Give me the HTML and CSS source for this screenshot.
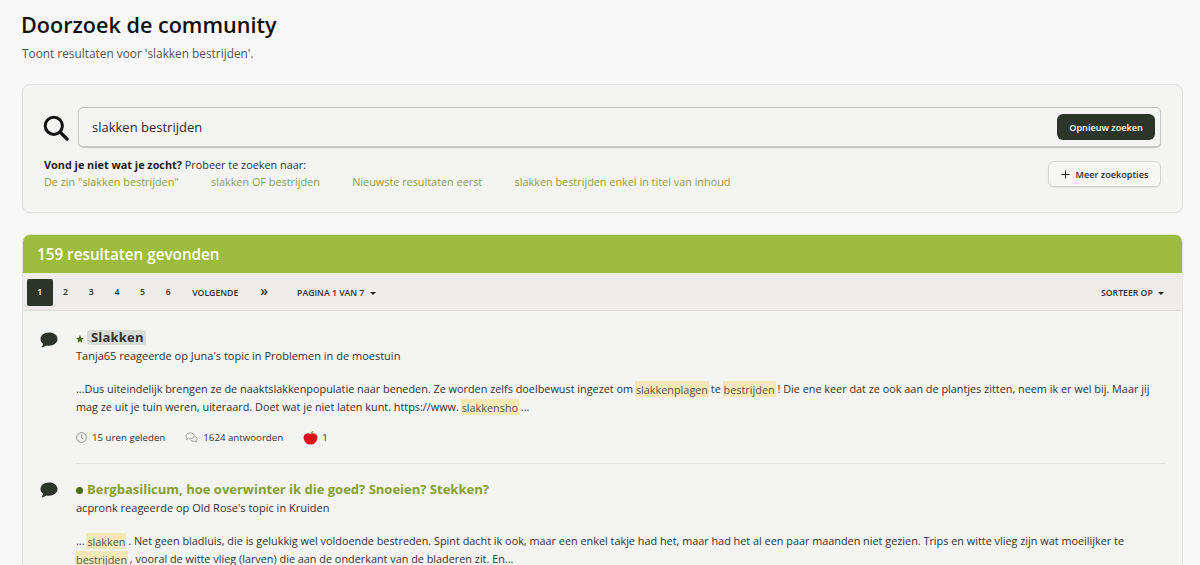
FILE: index.html
```html
<!DOCTYPE html>
<html lang="nl">
<head>
<meta charset="utf-8">
<title>Doorzoek de community</title>
<link rel="stylesheet" href="styles.css">
</head>
<body>
<main class="page">
  <header class="page-head">
    <h1>Doorzoek de community</h1>
    <p>Toont resultaten voor 'slakken bestrijden'.</p>
  </header>

  <section class="search-card">
    <div class="search-row">
      <svg class="search-icon" viewBox="0 0 26 26" width="26" height="26"><circle cx="10.8" cy="10.8" r="8.6" fill="none" stroke="#111" stroke-width="3"/><path d="M17 17l7 7" stroke="#111" stroke-width="3.2" stroke-linecap="round"/></svg>
      <div class="search-box">
        <span class="query">slakken bestrijden</span>
        <button class="btn-dark">Opnieuw zoeken</button>
      </div>
    </div>
    <div class="hint-row">
      <div class="hints">
        <div><strong>Vond je niet wat je zocht?</strong> Probeer te zoeken naar:</div>
        <div class="hint-links">
          <a>De zin "slakken bestrijden"</a>
          <a>slakken OF bestrijden</a>
          <a>Nieuwste resultaten eerst</a>
          <a>slakken bestrijden enkel in titel van inhoud</a>
        </div>
      </div>
      <button class="btn-light"><svg viewBox="0 0 10 10" width="9" height="9"><path d="M5 .5v9M.5 5h9" stroke="#222" stroke-width="1.1"/></svg>Meer zoekopties</button>
    </div>
  </section>

  <section class="results">
    <h2 class="results-head">159 resultaten gevonden</h2>
    <div class="pager">
      <a class="page-num current">1</a>
      <a class="page-num">2</a>
      <a class="page-num">3</a>
      <a class="page-num">4</a>
      <a class="page-num">5</a>
      <a class="page-num">6</a>
      <a class="pager-next">VOLGENDE</a>
      <a class="pager-last">»</a>
      <a class="pager-drop">PAGINA 1 VAN 7 <i class="caret"></i></a>
      <a class="pager-sort">SORTEER OP <i class="caret"></i></a>
    </div>

    <article class="result">
      <svg class="bubble" viewBox="0 0 18 16" width="18" height="16"><path d="M9 .5C4.2.5.5 3.3.5 7c0 1.9 1 3.600 2.500 4.800-.1 1.300-.7 2.500-1.500 3.500 1.800-.1 3.500-.8 4.700-1.900.9.200 1.800.3 2.800.3 4.800 0 8.500-2.900 8.500-6.700S13.800.5 9 .5z" fill="#2d352b"/></svg>
      <div class="result-body">
        <h3><svg class="star" viewBox="0 0 10 10" width="8" height="8"><path d="M5 0l1.500 3.300 3.500.4-2.600 2.400.7 3.600L5 7.900 1.900 9.700l.7-3.600L0 3.700l3.500-.4z" fill="#4f6a12"/></svg><span class="title-hit">Slakken</span></h3>
        <p class="byline">Tanja65 reageerde op Juna's topic in Problemen in de moestuin</p>
        <p class="excerpt">...Dus uiteindelijk brengen ze de naaktslakkenpopulatie naar beneden. Ze worden zelfs doelbewust ingezet om <mark>slakkenplagen</mark> te <mark>bestrijden</mark> ! Die ene keer dat ze ook aan de plantjes zitten, neem ik er wel bij. Maar jij mag ze uit je tuin weren, uiteraard. Doet wat je niet laten kunt. https://www. <mark>slakkensho</mark> ...</p>
        <div class="meta">
          <span class="meta-item"><svg viewBox="0 0 12 12" width="11" height="11"><circle cx="6" cy="6" r="5.300" fill="none" stroke="#888" stroke-width="1"/><path d="M6 2.800V6.300l2.200 1.300" fill="none" stroke="#888" stroke-width="1"/></svg>15 uren geleden</span>
          <span class="meta-item"><svg viewBox="0 0 14 12" width="13" height="11"><path d="M5.500 1C2.900 1 1 2.400 1 4.200c0 .9.500 1.700 1.200 2.300l-.5 1.700 2.200-1c.5.100 1 .2 1.600.2 2.600 0 4.500-1.400 4.500-3.200S8.100 1 5.500 1z" fill="none" stroke="#999"/><path d="M10.800 4.700c1.300.5 2.200 1.500 2.200 2.700 0 .8-.4 1.500-1 2l.4 1.500-1.900-.9c-.4.100-.8.100-1.300.1-1.300 0-2.400-.4-3.200-1.100" fill="none" stroke="#999"/></svg>1624 antwoorden</span>
          <span class="meta-item likes"><svg viewBox="0 0 16 16" width="15" height="15"><path d="M8 4.200C6.500 3 2.200 3 .8 6.500c-.9 3 1.200 7.500 4.500 8.800 1 .3 1.800-.2 2.700-.2s1.700.5 2.700.2c3.300-1.300 5.400-5.800 4.500-8.800C13.800 3 9.500 3 8 4.200z" fill="#e0101a"/><path d="M8 4.200c.2-1.700 1.400-3 3.300-3.400-.2 1.900-1.500 3.100-3.300 3.400z" fill="#7aa52a"/></svg>1</span>
        </div>
      </div>
    </article>

    <article class="result second">
      <svg class="bubble" viewBox="0 0 18 16" width="18" height="16"><path d="M9 .5C4.200.5.500 3.300.500 7c0 1.900 1 3.600 2.500 4.800-.1 1.300-.7 2.500-1.500 3.500 1.800-.1 3.500-.8 4.700-1.900.9.200 1.800.3 2.800.3 4.800 0 8.500-2.900 8.500-6.700S13.800.5 9 .5z" fill="#2d352b"/></svg>
      <div class="result-body">
        <h3><i class="dot"></i><a class="title-link">Bergbasilicum, hoe overwinter ik die goed? Snoeien? Stekken?</a></h3>
        <p class="byline">acpronk reageerde op Old Rose's topic in Kruiden</p>
        <p class="excerpt">... <mark>slakken</mark> . Net geen bladluis, die is gelukkig wel voldoende bestreden. Spint dacht ik ook, maar een enkel takje had het, maar had het al een paar maanden niet gezien. Trips en witte vlieg zijn wat moeilijker te <mark>bestrijden</mark> , vooral de witte vlieg (larven) die aan de onderkant van de bladeren zit. En...</p>
      </div>
    </article>
  </section>
</main>
</body>
</html>
```
FILE: styles.css
```css
* { box-sizing: border-box; }
html, body { margin: 0; height: 565px; overflow: hidden; }
body { background: #f8f8f8; color: #222; font-family: "Open Sans", "Liberation Sans", sans-serif; font-size: 11px; }
.page { padding: 10px 17px 0 22px; }
h1, h2, h3, p { margin: 0; }
.page-head h1 { font-size: 21.6px; line-height: 30px; font-weight: 600; color: #111; margin-left: -1px; }
.page-head p { margin-top: 5px; font-size: 11.85px; line-height: 16px; color: #555; }

.search-card { margin-top: 23px; height: 129px; padding: 22px 21px 0 21px; background: #f4f4f3; border: 1px solid #e2e2e2; border-radius: 8px; box-shadow: 0 1px 2px rgba(0,0,0,.04); }
.search-row { display: flex; align-items: center; gap: 9px; }
.search-icon { flex: none; margin: 1px 0 0 -1px; }
.search-box { flex: 1; height: 40px; display: flex; align-items: center; justify-content: space-between; padding: 0 5px 0 13px; border: 1px solid #c8c8c8; border-top-color: #bbb; border-radius: 5px; box-shadow: 0 1px 1px rgba(0,0,0,.2); background: #f4f4f2; }
.query { font-size: 13px; color: #2b2b2b; margin-top: -1px; }
.btn-dark { height: 26px; width: 98px; padding: 0; border: 0; border-radius: 6px; background: #2d352b; color: #fff; font: 600 9.15px "Open Sans", sans-serif; }
.hint-row { display: flex; justify-content: space-between; align-items: flex-start; margin-top: 9px; }
.hints { font-size: 10.85px; line-height: 17px; color: #333; }
.hints strong { font-weight: 700; color: #222; }
.hint-links { display: flex; gap: 32.4px; color: #8aa04a; }
.btn-light { display: flex; align-items: center; justify-content: center; gap: 6px; width: 113px; height: 26px; margin-top: 5px; padding: 0; border: 1px solid #d4d4d4; border-radius: 6px; background: #f7f7f6; color: #2b2b2b; box-shadow: 0 1px 1px rgba(0,0,0,.08); font: 600 9.15px "Open Sans", sans-serif; }

.results { margin-top: 21px; border: 1px solid #e4e4e4; border-bottom: 0; border-radius: 8px 8px 0 0; background: #f4f4f3; overflow: hidden; }
.results-head { height: 38px; padding-left: 14px; background: #9dbb3c; color: #fff; font-size: 15.25px; line-height: 38px; font-weight: 600; }
.pager { display: flex; align-items: center; height: 38px; margin-top: 0; padding: 2px 18px 0 4px; background: #eeedeb; border-bottom: 1px solid #dcdcdc; font-size: 8.7px; font-weight: 600; color: #333; }
.page-num { width: 25.7px; height: 27px; line-height: 27px; text-align: center; }
.page-num.current { background: #2d352b; color: #fff; border-radius: 2px; }
.pager-next { margin-left: 11px; }
.pager-last { margin-left: 22px; font-size: 14px; line-height: 14px; margin-top: -3px; }
.pager-drop { margin-left: 29px; }
.pager-sort { margin-left: auto; }
.caret { display: inline-block; width: 0; height: 0; margin-left: 3px; vertical-align: 1px; border: 3px solid transparent; border-top: 3.500px solid #222; border-bottom: 0; }

.result { display: flex; padding: 19px 17px 0 17px; }
.bubble { flex: none; margin-top: 2px; }
.result-body { flex: 1; margin-left: 18px; padding-bottom: 18px; border-bottom: 1px solid #e2e2e2; }
.result-body h3 { font-size: 13px; line-height: 18px; font-weight: 700; display: flex; align-items: center; }
.star { margin: 3px 3px 0 0; }
.title-hit { padding: 0 2px 0 4px; background: #d9dcd6; border-radius: 3px; color: #333; letter-spacing: .2px; line-height: 15px; }
.dot { width: 7px; height: 7px; margin: 3px 4px 0 0; border-radius: 50%; background: #4f6a12; }
.title-link { color: #84a033; }
.byline { margin-top: 3px; line-height: 16px; color: #333; }
.excerpt { margin-top: 16px; font-size: 10.85px; line-height: 18px; color: #333; }
mark { background: #f3e8b6; color: #555; padding: .5px 1px; margin: 0 -1px; }
.meta { display: flex; align-items: center; margin-top: 13px; height: 16px; color: #333; font-size: 9.7px; }
.meta-item { display: flex; align-items: center; gap: 5px; margin-right: 20px; }
.likes { gap: 4px; }
.second { padding-top: 16px; }
.second .byline { margin-top: 2px; }
.second .result-body { border-bottom: 0; }
```
